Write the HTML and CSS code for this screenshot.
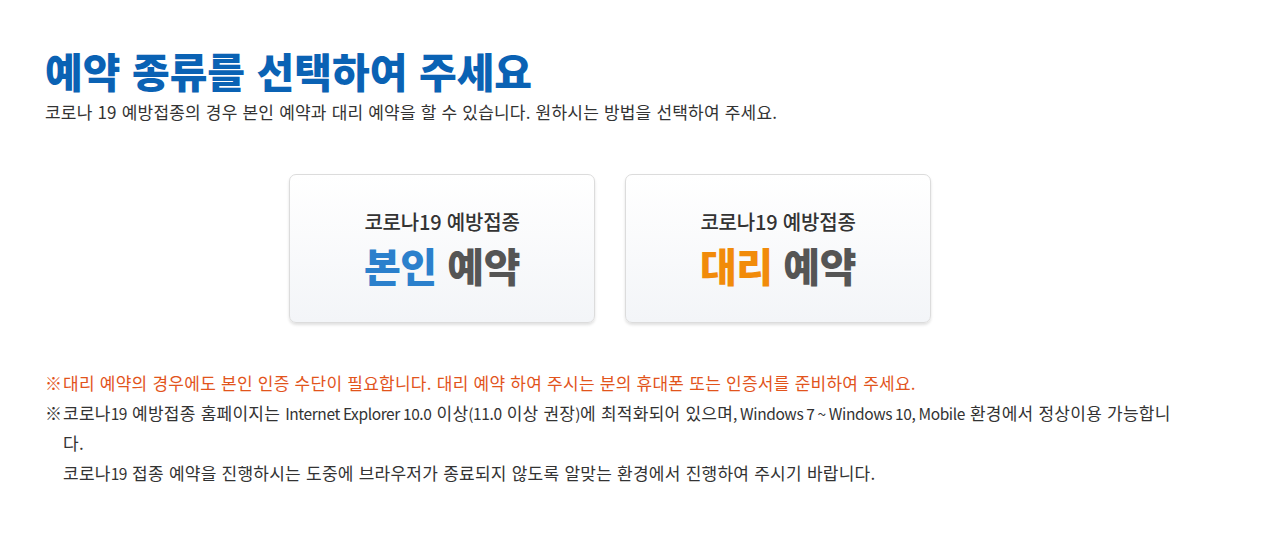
FILE: index.html
```html
<!DOCTYPE html>
<html lang="ko">
<head>
    <meta charset="UTF-8">
    <title>예약 종류 선택</title>
    <link rel="stylesheet" href="styles.css">
</head>
<body>
    <div class="wrap">
        <header class="page-head">
            <h1>예약 종류를 선택하여 주세요</h1>
            <p class="lead">코로나 19 예방접종의 경우 본인 예약과 대리 예약을 할 수 있습니다. 원하시는 방법을 선택하여 주세요.</p>
        </header>

        <div class="choices">
            <a class="choice" href="#">
                <span class="choice-sub">코로나19 예방접종</span>
                <span class="choice-title"><em class="self">본인</em> 예약</span>
            </a>
            <a class="choice" href="#">
                <span class="choice-sub">코로나19 예방접종</span>
                <span class="choice-title"><em class="proxy">대리</em> 예약</span>
            </a>
        </div>

        <ul class="notes">
            <li class="warn">대리 예약의 경우에도 본인 인증 수단이 필요합니다. 대리 예약 하여 주시는 분의 휴대폰 또는 인증서를 준비하여 주세요.</li>
            <li>코로나<span lang="en">19</span> 예방접종 홈페이지는 <span lang="en">Internet Explorer 10.0</span> 이상<span lang="en">(11.0</span> 이상 권장<span lang="en">)</span>에 최적화되어 있으며<span lang="en">, Windows 7 ~ Windows 10, Mobile</span> 환경에서 정상이용 가능합니다.<br>코로나<span lang="en">19</span> 접종 예약을 진행하시는 도중에 브라우저가 종료되지 않도록 알맞는 환경에서 진행하여 주시기 바랍니다.</li>
        </ul>
    </div>
</body>
</html>
```

FILE: styles.css
```css
body {
    margin: 0;
    padding: 0;
    background-color: #fff;
    font-family: "Noto Sans CJK KR", "Noto Sans", sans-serif;
    color: #333;
}

.wrap {
    width: 1130px;
    padding: 42px 0 0 45px;
}

.page-head h1 {
    margin: 0;
    font-size: 41px;
    line-height: 56px;
    font-weight: 900;
    letter-spacing: 0;
    color: #0a62b4;
}

.lead {
    margin: 0;
    font-size: 17px;
    line-height: 28px;
    letter-spacing: 0.2px;
    color: #333;
}

.choices {
    display: flex;
    justify-content: center;
    gap: 30px;
    margin-top: 48px;
}

.choice {
    display: flex;
    flex-direction: column;
    align-items: center;
    justify-content: center;
    width: 304px;
    height: 147px;
    border: 1px solid #dcdcdc;
    border-radius: 7px;
    background: linear-gradient(#fff, #f3f5f8);
    box-shadow: 0 2px 3px rgba(0, 0, 0, 0.12);
    text-decoration: none;
    color: #333;
}

.choice-sub {
    font-size: 20px;
    line-height: 28px;
    font-weight: 500;
    letter-spacing: -0.2px;
}

.choice-title {
    margin-top: 4px;
    font-size: 40px;
    line-height: 50px;
    font-weight: 900;
    letter-spacing: -0.5px;
    color: #555;
}

.choice-title em {
    font-style: normal;
}

.self {
    color: #2b80cc;
}

.proxy {
    color: #f18b0a;
}

.notes {
    margin: 45px 0 0;
    padding: 0;
    list-style: none;
    font-size: 17px;
    line-height: 30px;
    letter-spacing: 0.25px;
}

.notes li {
    padding-left: 18px;
    text-indent: -18px;
}

.notes li::before {
    content: "※";
    display: inline-block;
    width: 18px;
    text-indent: 0;
}

/* latin runs are narrower in the original font */
.notes [lang="en"] {
    font-size: 15.5px;
    letter-spacing: -0.4px;
}

.notes .warn {
    color: #e2541c;
}
```
